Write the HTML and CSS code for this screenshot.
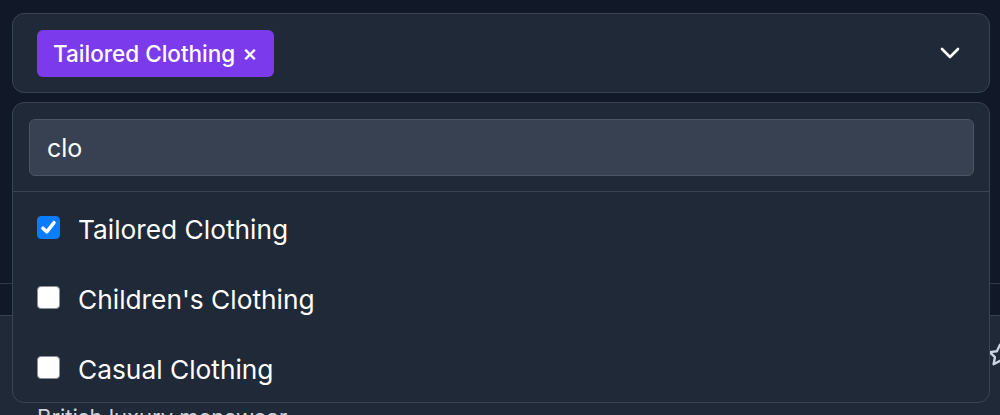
FILE: index.html
```html
<!DOCTYPE html>
<html lang="en">
<head>
<meta charset="utf-8">
<title>Category select</title>
<link rel="stylesheet" href="styles.css">
</head>
<body>
<div class="page">
  <div class="field">
    <div class="select">
      <div class="tags">
        <span class="tag">Tailored Clothing <span class="tag-x">×</span></span>
      </div>
      <svg class="chevron" width="20" height="12" viewBox="0 0 20 12" fill="none" stroke="#ffffff" stroke-width="2.6" stroke-linecap="round" stroke-linejoin="round"><path d="M2 2 L10 10 L18 2"/></svg>
    </div>
    <div class="menu">
      <div class="search-wrap">
        <div class="search">clo</div>
      </div>
      <ul class="options">
        <li class="option">
          <span class="box checked"><svg width="19" height="19" viewBox="0 0 16 16" fill="none" stroke="#fff" stroke-width="3" stroke-linecap="round" stroke-linejoin="round"><path d="M3.3 8.6 L6.5 11.6 L12.6 4"/></svg></span>
          <span class="label">Tailored Clothing</span>
        </li>
        <li class="option">
          <span class="box"></span>
          <span class="label">Children's Clothing</span>
        </li>
        <li class="option">
          <span class="box"></span>
          <span class="label">Casual Clothing</span>
        </li>
      </ul>
    </div>
  </div>
  <div class="behind">
    <div class="behind-head"></div>
    <div class="behind-row">
      <span class="desc">British luxury menswear</span>
      <svg class="star" width="26" height="26" viewBox="0 0 24 24" fill="none" stroke="#cbd5e1" stroke-width="2.2" stroke-linejoin="round"><path d="M12 2.5l2.9 6 6.6.9-4.8 4.6 1.2 6.5L12 17.4l-5.9 3.1 1.2-6.5L2.5 9.4l6.6-.9z"/></svg>
    </div>
  </div>
</div>
</body>
</html>
```

FILE: styles.css
```css
* { box-sizing: border-box; }
html, body { margin: 0; padding: 0; }
body {
  background: #111827;
  color: #f9fafb;
  font-family: "Inter", "Noto Sans", sans-serif;
  width: 1000px;
  height: 415px;
  overflow: hidden;
}
.page {
  padding: 13px 10px 0 12px;
  position: relative;
}
.field { position: relative; z-index: 2; }
.select {
  height: 80px;
  border: 1px solid #3b4455;
  border-radius: 12px;
  background: #1f2937;
  display: flex;
  align-items: center;
  justify-content: space-between;
  padding: 0 29px 0 24px;
}
.tag {
  display: inline-flex;
  align-items: center;
  gap: 7px;
  height: 47px;
  padding: 0 16px;
  border-radius: 6px;
  background: #7c3aed;
  color: #fff;
  font-size: 22.5px;
  font-weight: 500;
}
.tag-x { font-size: 23px; }
.chevron { display: block; }
.menu {
  position: absolute;
  top: 89px;
  left: 0;
  right: 0;
  height: 301px;
  border: 1px solid #3b4455;
  border-radius: 12px;
  background: #1f2937;
  overflow: hidden;
}
.search-wrap {
  padding: 16px 15px 15px 16px;
  border-bottom: 1px solid #3b4455;
}
.search {
  height: 57px;
  border: 1px solid #4b5563;
  border-radius: 6px;
  background: #374151;
  padding: 0 17px;
  display: flex;
  align-items: center;
  font-size: 25px;
  color: #fff;
}
.options { list-style: none; margin: 0; padding: 0; }
.option {
  height: 70px;
  display: flex;
  align-items: center;
  gap: 18px;
  padding-left: 24px;
  font-size: 26.3px;
  color: #fff;
}
.label { position: relative; top: 2px; }
.box {
  width: 23px;
  height: 23px;
  border-radius: 4px;
  background: #ffffff;
  border: 1px solid #8a8f98;
  display: flex;
  align-items: center;
  justify-content: center;
  flex: none;
}
.box.checked { background: #0a7cff; border-color: #0a7cff; }
.behind {
  position: absolute;
  top: 283px;
  left: 0;
  width: 1000px;
  z-index: 1;
}
.behind-head {
  height: 33px;
  border-top: 1px solid #2f3848;
  border-bottom: 1px solid #374151;
}
.behind-row {
  height: 120px;
  background: #1f2937;
  position: relative;
}
.desc {
  position: absolute;
  left: 37px;
  top: 88px;
  font-size: 22px;
  line-height: 26px;
  color: #d1d5db;
}
.star { position: absolute; right: -13px; top: 26px; }
```
